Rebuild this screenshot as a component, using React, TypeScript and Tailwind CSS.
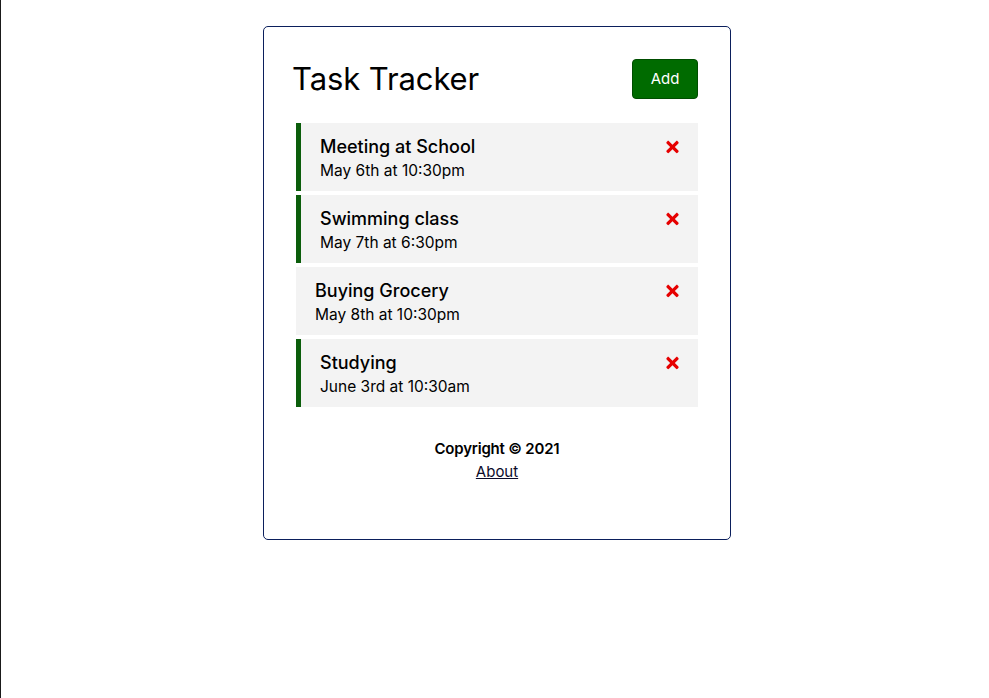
import React from "react";
import { FaTimes } from "react-icons/fa";

const tasks = [
  { text: "Meeting at School", day: "May 6th at 10:30pm", reminder: true },
  { text: "Swimming class", day: "May 7th at 6:30pm", reminder: true },
  { text: "Buying Grocery", day: "May 8th at 10:30pm", reminder: false },
  { text: "Studying", day: "June 3rd at 10:30am", reminder: true },
];

export default function App() {
  return (
    <div
      className="min-h-[698px] w-full border-l border-[#1a1a1a] bg-white text-black pt-[26px] pl-[4px]"
      style={{ fontFamily: "Inter, 'Noto Sans', sans-serif" }}
    >
      <div className="mx-auto w-[468px] min-h-[514px] rounded-[5px] border border-[#0b1f5c] px-[28px] pt-[28px] pb-[28px]">
        <header className="flex items-center justify-between mb-[20px]">
          <h1 className="text-[31px] leading-[40px] font-normal tracking-[-0.1px]">Task Tracker</h1>
          <button className="m-[4px] h-[40px] w-[66px] rounded-[4px] border border-[#004d00] bg-[#006b00] text-[15px] font-normal text-white">
            Add
          </button>
        </header>
        <div className="flex flex-col gap-[4px]">
          {tasks.map((t) => (
            <div
              key={t.text}
              className={
                "mx-[4px] h-[68px] bg-[#f3f3f3] pr-[19px] pt-[10px] " +
                (t.reminder ? "border-l-[5px] border-[#0b5d0b] pl-[19px]" : "pl-[19px]")
              }
            >
              <h3 className="flex items-center justify-between text-[18px] leading-[27px] font-medium">
                {t.text}
                <FaTimes className="h-[18px] w-[13px] text-[#e60000]" />
              </h3>
              <p className="text-[15.5px] leading-[22px] font-normal">{t.day}</p>
            </div>
          ))}
        </div>
        <footer className="mt-[30px] flex flex-col items-center text-[15px] leading-[23px]">
          <p className="font-semibold tracking-[-0.2px]">Copyright © 2021</p>
          <a href="#" className="underline text-[#0b0b2a]">About</a>
        </footer>
      </div>
    </div>
  );
}
